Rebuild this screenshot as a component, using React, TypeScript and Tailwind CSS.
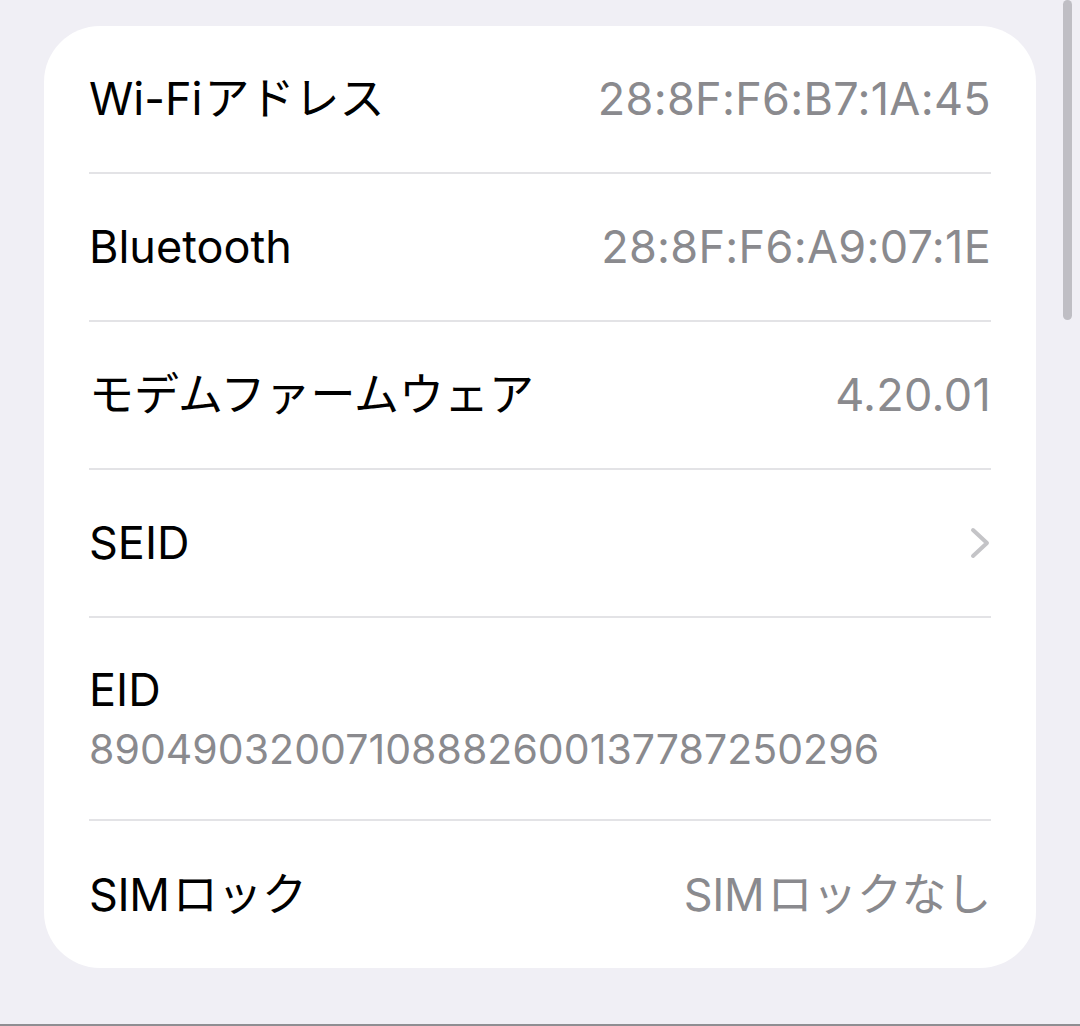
export default function App() {
  const font = { fontFamily: 'Inter, "Noto Sans CJK JP", sans-serif' }
  const rows: { label: React.ReactNode; key: string; value?: string; chevron?: boolean }[] = [
    { key: 'wifi', label: <>Wi-Fi<span className="ml-[2px]">アドレス</span></>, value: '28:8F:F6:B7:1A:45' },
    { key: 'bt', label: 'Bluetooth', value: '28:8F:F6:A9:07:1E' },
    { key: 'modem', label: 'モデムファームウェア', value: '4.20.01' },
    { key: 'seid', label: 'SEID', chevron: true },
  ]

  return (
    <div className="relative h-[1026px] w-[1080px] overflow-hidden bg-[#f0eff5]" style={font}>
      {/* scroll indicator */}
      <div className="absolute right-[8px] top-0 h-[320px] w-[9px] rounded-full bg-[#bfbec4]"></div>

      <div className="pl-[44px] pt-[26px]">
        <div className="w-[992px] rounded-[56px] bg-white px-[45px]">
          {rows.map((r) => (
            <div key={r.key} className="flex h-[148px] items-center justify-between border-b-2 border-[#e3e3e6]">
              <span className="text-[45px] text-black">{r.label}</span>
              {r.value && <span className="text-[45px] tracking-[0.3px] text-[#8a8a8e]">{r.value}</span>}
              {r.chevron && (
                <svg width="22" height="34" viewBox="0 0 22 34">
                  <path d="M4 4 L18 17 L4 30" fill="none" stroke="#c4c4c7" strokeWidth="4" strokeLinecap="round" strokeLinejoin="round" />
                </svg>
              )}
            </div>
          ))}

          <div className="flex h-[203px] flex-col justify-center border-b-2 border-[#e3e3e6]">
            <span className="text-[45px] leading-[60px] text-black">EID</span>
            <span className="text-[41px] leading-[58px] tracking-[0.05px] text-[#8a8a8e]">89049032007108882600137787250296</span>
          </div>

          <div className="flex h-[147px] items-center justify-between">
            <span className="text-[45px] tracking-[-0.3px] text-black">
              SIM<span className="ml-[3px]">ロック</span>
            </span>
            <span className="text-[45px] tracking-[-0.3px] text-[#8a8a8e]">
              SIM<span className="ml-[3px]">ロックなし</span>
            </span>
          </div>
        </div>
      </div>

      <div className="absolute bottom-0 left-0 h-[2px] w-full bg-[#8e8e92]"></div>
    </div>
  )
}
